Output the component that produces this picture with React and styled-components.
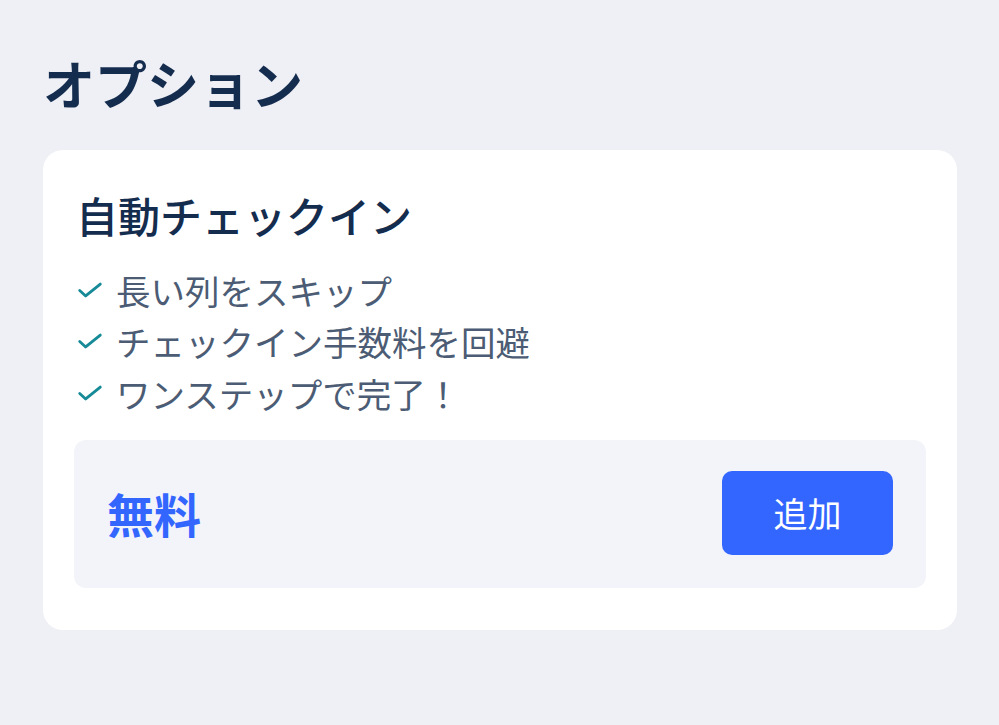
import React from "react";
import styled, { createGlobalStyle } from "styled-components";

const GlobalStyle = createGlobalStyle`
  html, body {
    margin: 0;
    padding: 0;
    background: #eff0f5;
  }
  body {
    font-family: "Noto Sans CJK JP", "Noto Sans", sans-serif;
  }
`;

const Page = styled.div`
  width: 999px;
  height: 725px;
  box-sizing: border-box;
  padding: 50px 42px 0 43px;
  background: #eff0f5;
`;

const Title = styled.h1`
  margin: 0 0 34px 0;
  font-size: 52px;
  line-height: 66px;
  font-weight: 700;
  color: #142c4e;
`;

const Card = styled.div`
  background: #ffffff;
  border-radius: 20px;
  padding: 37px 31px 42px 31px;
`;

const CardTitle = styled.h2`
  margin: 0 0 21px 2px;
  font-size: 42px;
  line-height: 56px;
  font-weight: 500;
  color: #142c4e;
`;

const FeatureList = styled.ul`
  list-style: none;
  margin: 0 0 21px 0;
  padding: 0;
`;

const Feature = styled.li`
  display: flex;
  align-items: center;
  gap: 13px;
  height: 51.5px;
  padding-left: 3px;
  font-size: 34.5px;
  color: #4b5c74;
`;

const Check = () => (
  <svg width="26" height="26" viewBox="0 0 24 24" fill="none">
    <path
      d="M2.5 12.5l5.5 5L21.5 6.5"
      stroke="#168a96"
      strokeWidth="2.6"
      strokeLinecap="round"
      strokeLinejoin="round"
    />
  </svg>
);

const PriceBox = styled.div`
  display: flex;
  align-items: center;
  justify-content: space-between;
  background: #f3f4f9;
  border-radius: 12px;
  padding: 31px 33px 33px 33px;
`;

const Price = styled.span`
  font-size: 47px;
  font-weight: 700;
  color: #3366ff;
`;

const AddButton = styled.button`
  width: 171px;
  height: 84px;
  border: none;
  border-radius: 10px;
  background: #3366ff;
  color: #ffffff;
  font-family: inherit;
  font-size: 34px;
  font-weight: 400;
  cursor: pointer;
`;

const features = [
  "長い列をスキップ",
  "チェックイン手数料を回避",
  "ワンステップで完了！",
];

export default function App() {
  return (
    <Page>
      <GlobalStyle />
      <Title>オプション</Title>
      <Card>
        <CardTitle>自動チェックイン</CardTitle>
        <FeatureList>
          {features.map((f) => (
            <Feature key={f}>
              <Check />
              {f}
            </Feature>
          ))}
        </FeatureList>
        <PriceBox>
          <Price>無料</Price>
          <AddButton>追加</AddButton>
        </PriceBox>
      </Card>
    </Page>
  );
}
